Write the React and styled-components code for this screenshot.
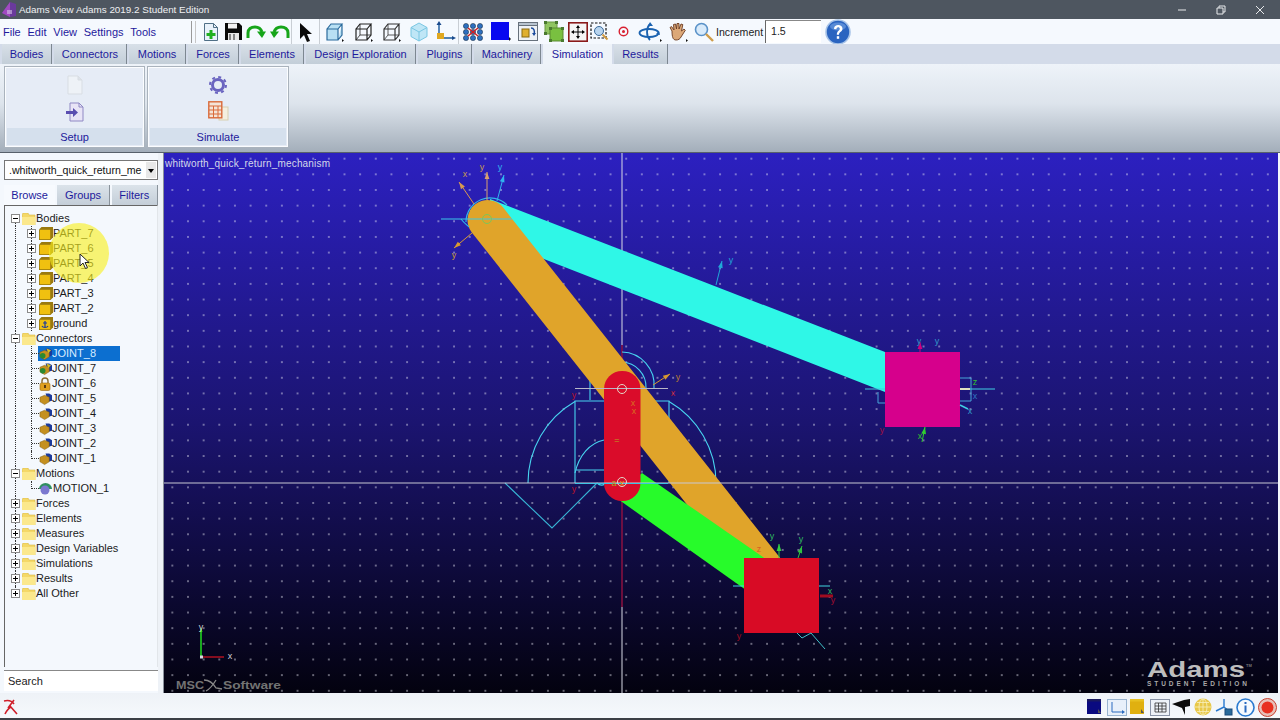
import React from 'react';
import styled, { createGlobalStyle } from 'styled-components';

const GlobalStyle = createGlobalStyle`
  html, body {
    margin: 0;
    padding: 0;
    overflow: hidden;
    background: #f3f7fc;
    font-family: "Liberation Sans", Arial, sans-serif;
  }
`;

const Window = styled.div`
  width: 1280px;
  height: 720px;
  display: flex;
  flex-direction: column;
  position: relative;
  overflow: hidden;
  font-size: 11px;
`;

const TitleBar = styled.div`
  height: 19px;
  flex: none;
  background: #4e5660;
  color: #eef0f2;
  display: flex;
  align-items: center;
  padding: 0 2px;
  gap: 3px;
`;

const TitleText = styled.span`
  flex: 1;
  font-size: 9.9px;
`;

const WindowButton = styled.div`
  width: 36px;
  height: 19px;
  display: flex;
  align-items: center;
  justify-content: center;
`;

const ToolRow = styled.div`
  height: 25px;
  flex: none;
  display: flex;
  align-items: center;
  background: #f5f9fe;
`;

const MenuBar = styled.div`
  width: 191px;
  display: flex;
  padding-left: 3px;
  box-sizing: border-box;
  gap: 6.8px;
`;

const MenuItem = styled.span`
  color: #1e1a9c;
  font-size: 11px;
`;

const Grip = styled.div`
  width: 3px;
  height: 22px;
  margin: 0 4px 0 0;
  border-left: 1px solid #9a9a9a;
  border-right: 1px solid #c6c6c6;
`;

const ToolSlot = styled.div`
  width: ${p => p.$w}px;
  height: 25px;
  flex: none;
  display: flex;
  align-items: center;
  justify-content: center;
  box-sizing: border-box;
  border-right: ${p => (p.$sep ? '1px solid #c9ced4' : 'none')};
`;

const IncrementLabel = styled.span`
  width: 49px;
  flex: none;
  color: #222;
  font-size: 10.6px;
`;

const IncrementInput = styled.div`
  width: 56px;
  height: 23px;
  flex: none;
  box-sizing: border-box;
  background: #fff;
  border-left: 1px solid #666;
  border-top: 1px solid #888;
  padding: 4px 0 0 5px;
  color: #222;
  font-size: 10.6px;
`;

const HelpSlot = styled.div`
  margin-left: 4px;
  display: flex;
`;

const TabRow = styled.div`
  height: 20px;
  flex: none;
  display: flex;
  background: #d3dbe9;
  padding-left: 2px;
  gap: 2px;
`;

const Tab = styled.div`
  width: ${p => p.$w}px;
  box-sizing: border-box;
  display: flex;
  align-items: center;
  justify-content: center;
  color: #1e1a9c;
  font-size: 11px;
  background: ${p => (p.$active ? '#eef3f9' : 'linear-gradient(#d8e0e8, #c3ced8)')};
  border-right: ${p => (p.$active ? 'none' : '1px solid #7d8791')};
`;

const Ribbon = styled.div`
  height: 89px;
  flex: none;
  box-sizing: border-box;
  display: flex;
  gap: 4px;
  padding: 3px 0 0 5px;
  background: linear-gradient(#eef3f9 0%, #dde4ec 45%, #a3aeba 100%);
  border-bottom: 1px solid #58616b;
`;

const RibbonPanel = styled.div`
  width: ${p => p.$w}px;
  height: 80px;
  box-sizing: border-box;
  display: flex;
  flex-direction: column;
  background: #e6ecf6;
  border: 1px solid #fbfdff;
  outline: 1px solid #aab3bd;
`;

const RibbonIcons = styled.div`
  flex: 1;
  display: flex;
  flex-direction: column;
  align-items: center;
  justify-content: center;
  gap: 7px;
`;

const RibbonLabel = styled.div`
  height: 17px;
  flex: none;
  margin: 0 1px 1px;
  background: #d5e0ed;
  color: #1e1a9c;
  font-size: 11px;
  display: flex;
  align-items: center;
  justify-content: center;
`;

const Main = styled.div`
  flex: 1;
  min-height: 0;
  display: flex;
`;

const Sidebar = styled.div`
  width: 158px;
  flex: none;
  box-sizing: border-box;
  display: flex;
  flex-direction: column;
  padding: 7px 0 2px 4px;
  background: #f4f8fd;
  position: relative;
`;

const Combo = styled.div`
  height: 20px;
  flex: none;
  box-sizing: border-box;
  display: flex;
  align-items: center;
  justify-content: space-between;
  background: #fff;
  border: 1px solid #777;
  padding: 0 1px 0 4px;
  color: #111;
  font-size: 10.6px;
`;

const ComboArrow = styled.div`
  width: 10px;
  height: 16px;
  background: #e8e8e8;
  display: flex;
  align-items: center;
  justify-content: center;
  &::after {
    content: '';
    border: 3.5px solid transparent;
    border-top: 4px solid #000;
    margin-top: 4px;
  }
`;

const SideTabs = styled.div`
  display: flex;
  height: 20px;
  flex: none;
  margin-top: 5px;
  gap: 2px;
`;

const SideTab = styled.div`
  width: ${p => p.$w}px;
  display: flex;
  align-items: center;
  justify-content: center;
  color: #1e1a9c;
  font-size: 11px;
  background: ${p => (p.$active ? '#f7fafe' : 'linear-gradient(#dbe3ea, #c4ced8)')};
  border-right: ${p => (p.$active ? 'none' : '1px solid #8a939c')};
`;

const TreePanel = styled.div`
  flex: 1;
  min-height: 0;
  margin-top: 0;
  padding-top: 5px;
  border-left: 1px solid #666;
  border-top: 1px solid #666;
  border-right: 1px solid #e2e6ea;
`;

const TreeRow = styled.div`
  height: 15px;
  display: flex;
  align-items: stretch;
  color: #1b1b1b;
  font-size: 11px;
  padding-left: 3px;
`;

const GuideCell = styled.div`
  width: ${p => p.$w || 16}px;
  flex: none;
  position: relative;
  &::before {
    content: '';
    position: absolute;
    left: 7px;
    top: ${p => (p.$first ? '7px' : '0')};
    bottom: ${p => (p.$last ? '7px' : '0')};
    border-left: 1px dotted #333;
    display: ${p => (p.$line ? 'block' : 'none')};
  }
  &::after {
    content: '';
    position: absolute;
    left: 8px;
    top: 7px;
    width: 7px;
    border-top: 1px dotted #333;
    display: ${p => (p.$elbow ? 'block' : 'none')};
  }
`;

const Expander = styled.div`
  position: absolute;
  left: 3px;
  top: 3px;
  width: 9px;
  height: 9px;
  box-sizing: border-box;
  border: 1px solid #8a8a8a;
  background: #fff;
  z-index: 1;
  &::before {
    content: '';
    position: absolute;
    left: 1px;
    right: 1px;
    top: 3px;
    border-top: 1px solid #000;
  }
  &::after {
    content: '';
    position: absolute;
    top: 1px;
    bottom: 1px;
    left: 3px;
    border-left: 1px solid #000;
    display: ${p => (p.$open ? 'none' : 'block')};
  }
`;

const TreeIcon = styled.div`
  width: ${p => p.$w || 14}px;
  flex: none;
  display: flex;
  align-items: center;
`;

const FolderSlot = styled(TreeIcon)`
  margin-left: -2px;
`;

const TreeLabel = styled.span`
  line-height: 15px;
  white-space: nowrap;
`;

const SelectedRow = styled.div`
  width: 82px;
  display: flex;
  padding-left: 1px;
  box-sizing: border-box;
  background: #0c6fd0;
  color: #d8ecff;
  margin-left: -1px;
`;

const SearchBox = styled.div`
  height: 21px;
  flex: none;
  margin-top: 3px;
  box-sizing: border-box;
  background: #fff;
  border-top: 1px solid #888;
  padding: 4px 0 0 4px;
  color: #222;
  font-size: 11px;
`;

const Splitter = styled.div`
  width: 5px;
  flex: none;
  background: #eef2f7;
  border-right: 1px solid #8b929c;
`;

const Viewport = styled.div`
  flex: 1;
  min-width: 0;
  display: flex;
  background: #14106a;
  border-right: 2px solid #f3f7fc;
`;

const StatusBar = styled.div`
  height: 27px;
  flex: none;
  box-sizing: border-box;
  display: flex;
  align-items: center;
  padding: 3px 2px 0 3px;
  background: linear-gradient(#eef2f7, #f6f9fc);
  border-bottom: 2px solid #3c4046;
`;

const StatusSpacer = styled.div`
  flex: 1;
`;

const StatusSlot = styled.div`
  width: 21.5px;
  display: flex;
  align-items: center;
  justify-content: center;
`;

const Highlight = styled.div`
  position: absolute;
  left: 49px;
  top: 70px;
  width: 60px;
  height: 60px;
  border-radius: 50%;
  background: rgba(248, 240, 30, 0.62);
  pointer-events: none;
`;

const Pointer = styled.svg`
  position: absolute;
  left: 79px;
  top: 100px;
`;

/* ---- toolbar drawings ---- */

const NewIcon = () => (
  <svg width="16" height="20" viewBox="0 0 16 20">
    <path d="M1.5 1.5h9l4 4v13h-13z" fill="#e8f1fa" stroke="#4f6f86" />
    <path d="M10.5 1.5v4h4" fill="none" stroke="#4f6f86" />
    <path d="M6.5 8h3v3h3v3h-3v3h-3v-3h-3v-3h3z" fill="#20b020" />
  </svg>
);
const SaveIcon = () => (
  <svg width="19" height="19" viewBox="0 0 19 19">
    <path d="M1 1h14l3 3v14H1z" fill="#0a0a0a" />
    <path d="M4 1.5h9v5H4z" fill="#f3f3f3" />
    <path d="M4 11h11v7H4z" fill="#e8e8e8" />
    <path d="M6 12v6M10 12v6" stroke="#222" />
  </svg>
);
const TurnIcon = ({ flip }) => (
  <svg width="21" height="14" viewBox="0 0 21 14" style={flip ? { transform: 'scaleX(-1)' } : undefined}>
    <path d="M2 13V8c0-4 3-6 7-6s6 2 7 5" fill="none" stroke="#16a51a" strokeWidth="3" />
    <path d="M11 6.5h9L16 13z" fill="#16a51a" />
  </svg>
);
const ArrowIcon = () => (
  <svg width="14" height="20" viewBox="0 0 14 20">
    <path d="M1 1l12 11H8l3 7-3 1-3-7-4 4z" fill="#0a0a0a" />
  </svg>
);
const CubeFrame = ({ fill, stroke }) => (
  <svg width="20" height="20" viewBox="0 0 20 20">
    <path d="M2 7h11v11H2zM2 7l4-5h11l-4 5M13 18l4-5V2" fill={fill} stroke={stroke} strokeWidth="1.2" />
    <path d="M6 2v11h11M2 18l4-5" fill="none" stroke={stroke} strokeWidth={fill === 'none' ? 0.8 : 0} />
    <path d="M17 17l2 1.5-2 1.5z" fill="#111" />
  </svg>
);
const ShadedCube = () => (
  <svg width="18" height="20" viewBox="0 0 18 20">
    <path d="M9 1l8 4.5v9L9 19l-8-4.5v-9z" fill="#bfe6f6" stroke="#79c6e2" />
    <path d="M1 5.5L9 10l8-4.5M9 10v9" fill="none" stroke="#79c6e2" />
  </svg>
);
const AxesIcon = () => (
  <svg width="22" height="22" viewBox="0 0 22 22">
    <path d="M5 2v15h15" fill="none" stroke="#1a5a9c" strokeWidth="1.4" />
    <path d="M5 0l-2.5 4h5zM22 17l-4-2v4z" fill="#1a4a8c" />
    <rect x="3" y="12" width="7" height="6" fill="#e0a820" />
  </svg>
);
const NetworkIcon = () => (
  <svg width="20" height="20" viewBox="0 0 20 20">
    {[3, 10, 17].map(x => [4, 10, 16].map(y => (
      <circle key={`${x}-${y}`} cx={x} cy={y} r="2.6" fill="#2d6fc0" stroke="#123" strokeWidth=".5" />
    )))}
    <path d="M5 14l10-8M5 6l10 8" stroke="#d42020" strokeWidth="1.6" />
  </svg>
);
const BlueSquare = () => (
  <svg width="20" height="20" viewBox="0 0 20 20">
    <rect width="18" height="18" fill="#0808f0" />
    <path d="M18 15l2 2-2 2z" fill="#111" />
  </svg>
);
const LayerIcon = () => (
  <svg width="22" height="20" viewBox="0 0 22 20">
    <rect x=".5" y=".5" width="19" height="18" fill="#eef2f6" stroke="#67717c" />
    <rect x=".5" y=".5" width="19" height="3" fill="#b8c4d0" stroke="#67717c" />
    <rect x="4" y="7" width="7" height="8" fill="#e0b030" stroke="#8a6a10" />
    <path d="M13 6c3 0 4 3 3 6" fill="none" stroke="#1a4a9c" strokeWidth="1.4" />
    <path d="M14 11h4l-2 3z" fill="#1a4a9c" />
  </svg>
);
const GreenSelect = () => (
  <svg width="21" height="21" viewBox="0 0 21 21">
    <rect x="1" y="1" width="12" height="12" fill="#8fc460" stroke="#6a9a40" />
    <rect x="6" y="7" width="13" height="13" fill="#79c040" stroke="#5a8a30" />
    {[[0, 0], [11, 0], [0, 11], [5, 6], [17, 6], [5, 18], [17, 18]].map(([x, y]) => (
      <rect key={`${x}-${y}`} x={x} y={y} width="3" height="3" fill="#4a7a30" />
    ))}
  </svg>
);
const FitIcon = () => (
  <svg width="20" height="20" viewBox="0 0 20 20">
    <rect x=".8" y=".8" width="18.4" height="18.4" fill="#f5f5f5" stroke="#8a1a1a" strokeWidth="1.6" />
    <path d="M10 3l2 3H8zM10 17l-2-3h4zM3 10l3-2v4zM17 10l-3 2V8z" fill="#000" />
    <path d="M10 5v10M5 10h10" stroke="#000" />
  </svg>
);
const ZoomBox = () => (
  <svg width="20" height="20" viewBox="0 0 20 20">
    <rect x="1" y="1" width="15" height="15" fill="none" stroke="#111" strokeWidth="1.2" strokeDasharray="2.5 1.5" />
    <circle cx="9" cy="9" r="4.5" fill="#b8d4ee" stroke="#3a6a9a" />
    <path d="M12.5 12.5l5 5" stroke="#d09a40" strokeWidth="2" />
  </svg>
);
const TargetIcon = () => (
  <svg width="11" height="11" viewBox="0 0 11 11">
    <circle cx="5.5" cy="5.5" r="4.3" fill="none" stroke="#d82030" strokeWidth="1.4" />
    <circle cx="5.5" cy="5.5" r="1.5" fill="#d82030" />
  </svg>
);
const RotateIcon = () => (
  <svg width="24" height="20" viewBox="0 0 24 20">
    <ellipse cx="11" cy="11" rx="9.5" ry="4" fill="none" stroke="#1a62b0" strokeWidth="1.8" />
    <path d="M12 18C8 14 8 6 12 2" fill="none" stroke="#1a62b0" strokeWidth="1.8" />
    <path d="M12 0l3 4h-5zM21 9l1 4-4-1z" fill="#1a62b0" />
    <path d="M22 17l2 1.5-2 1.5z" fill="#111" />
  </svg>
);
const HandIcon = () => (
  <svg width="20" height="20" viewBox="0 0 20 20">
    <path d="M4 9L2 5.5 3.6 4.600 6 8 5.500 2.500 7.500 2 8.500 7 9 1.500h2L11 7l2-5 1.800.6L13.500 9l2.500-2 1.300 1.300L13 15c-1 2-2.500 3-5 3-3 0-4-3-4-9z" fill="#dca878" stroke="#6a3a20" strokeWidth=".9" />
    <path d="M18 17l2 1.500-2 1.500z" fill="#111" />
  </svg>
);
const LensIcon = () => (
  <svg width="20" height="20" viewBox="0 0 20 20">
    <circle cx="7.500" cy="7.500" r="6" fill="#d8eafa" stroke="#5a92c8" strokeWidth="1.6" />
    <path d="M12 12l7 7" stroke="#cf9c48" strokeWidth="2.400" />
  </svg>
);
const HelpIcon = () => (
  <svg width="26" height="26" viewBox="0 0 26 26">
    <circle cx="13" cy="13" r="12" fill="#2a64c0" stroke="#a8c4e8" strokeWidth="1.600" />
    <ellipse cx="13" cy="7.500" rx="8" ry="4" fill="#6c9be0" opacity=".7" />
    <path d="M9 10c0-3 2-4 4.200-4s4.300 1.200 4.300 3.800c0 3-3.500 3-3.500 6h-2.200c0-4 3-4 3-6 0-1-.7-1.600-1.700-1.600S11.500 9 11.400 10.300z" fill="#fff" />
    <rect x="11.800" y="17.200" width="2.400" height="2.600" fill="#fff" />
  </svg>
);
const WindowGlyph = ({ d }) => (
  <svg width="10" height="10" viewBox="0 0 10 10">
    <path d={d} fill="none" stroke="#e8eaec" strokeWidth="1" />
  </svg>
);
const AppLogo = () => (
  <svg width="14" height="15" viewBox="0 0 14 15">
    <path d="M8 0l6 2v12l-6 1-8-4z" fill="#6a3a9c" />
    <path d="M8 0v15L0 11z" fill="#a04ac0" />
    <path d="M5 8h5v4H5z" fill="#d4c0e8" opacity=".6" />
  </svg>
);

/* ---- ribbon drawings ---- */

const BlankDoc = () => (
  <svg width="16" height="20" viewBox="0 0 16 20">
    <path d="M1 1h10l4 4v14H1z" fill="#eef2f7" stroke="#d8dde3" />
    <path d="M11 1v4h4" fill="#dde2e8" stroke="#d8dde3" />
  </svg>
);
const ImportDoc = () => (
  <svg width="20" height="20" viewBox="0 0 20 20">
    <path d="M5 1h9l4 4v14H5z" fill="#e8e4f6" stroke="#8f88c4" />
    <path d="M14 1v4h4" fill="none" stroke="#8f88c4" />
    <path d="M1 9h7V6l5 4.500-5 4.500v-3H1z" fill="#5a4eb0" />
  </svg>
);
const GearIcon = () => (
  <svg width="18" height="18" viewBox="0 0 18 18">
    <circle cx="9" cy="9" r="5.500" fill="none" stroke="#6a64c0" strokeWidth="3" />
    <circle cx="9" cy="9" r="8" fill="none" stroke="#6a64c0" strokeWidth="2" strokeDasharray="3 3.280" />
  </svg>
);
const TableDoc = () => (
  <svg width="21" height="20" viewBox="0 0 21 20">
    <rect x="11" y="6" width="9" height="13" fill="#f4efe0" stroke="#d8cfb0" />
    <rect x=".8" y=".8" width="13" height="16" fill="#f4e4d8" stroke="#d96a3a" strokeWidth="1.400" />
    <path d="M1 5h13M1 9h13M1 13h13M5.500 5v12M10 5v12" stroke="#d96a3a" />
  </svg>
);

/* ---- tree drawings ---- */

const FolderIcon = () => (
  <svg width="14" height="12" viewBox="0 0 14 12">
    <path d="M0 2l1-2h5l1 2h6v10H0z" fill="#f4d868" stroke="#d8b848" strokeWidth=".6" />
    <path d="M0 4h13.500v8H0z" fill="#fbe88c" />
  </svg>
);
const PartIcon = ({ anchor }) => (
  <svg width="14" height="13" viewBox="0 0 14 13">
    <path d="M0 2.500L2.500 0H14v10.500L11.500 13H0z" fill="#9a7a10" />
    <rect x=".8" y="2.800" width="10.400" height="9.400" fill="#f0c010" />
    {anchor && <path d="M6 4v7M4 6h4M3 9c1 2 5 2 6 0" fill="none" stroke="#1a3aa0" strokeWidth="1.200" />}
  </svg>
);
const JointIcon = ({ green }) => (
  <svg width="14" height="14" viewBox="0 0 14 14">
    <path d="M7 1h4l3 2v6l-4 1z" fill="#1a3a9c" />
    <path d="M1 5l5-2 5 2v5l-5 3-5-3z" fill="#c49020" stroke="#7a5a10" strokeWidth=".5" />
    {green && <circle cx="4" cy="9" r="3" fill="#2a8a30" />}
    {green && <path d="M8 1l5 2-3 3z" fill="#d8c020" />}
  </svg>
);
const LockIcon = () => (
  <svg width="12" height="14" viewBox="0 0 12 14">
    <path d="M3 6V4a3 3 0 0 1 6 0v2" fill="none" stroke="#8a6a30" strokeWidth="1.400" />
    <rect x="1" y="6" width="10" height="7.500" rx="1.500" fill="#e0a020" stroke="#9a6a10" strokeWidth=".6" />
    <rect x="5" y="8" width="2" height="3" fill="#5a3a10" />
  </svg>
);
const MotionIcon = () => (
  <svg width="13" height="12" viewBox="0 0 13 12">
    <path d="M0 6a6.500 6 0 0 1 13 0z" fill="#2f8f60" />
    <circle cx="6" cy="7" r="4.500" fill="#7a78d0" />
  </svg>
);

/* ---- status bar drawings ---- */

const ScissorIcon = () => (
  <svg width="17" height="17" viewBox="0 0 17 17">
    <path d="M1 2c4-1 8 0 10 3M11 1L5 9M7 7l7 8M2 15c2-4 4-6 6-7" fill="none" stroke="#cf1f2a" strokeWidth="1.600" />
  </svg>
);
const SwatchIcon = ({ top, bottom }) => (
  <svg width="16" height="16" viewBox="0 0 16 16">
    <rect x="0" y="0" width="14" height="15" fill={bottom} />
    <rect x="0" y="0" width="14" height="2.500" fill={top} />
    <path d="M11 10l3 4h-3z" fill="#555" />
  </svg>
);
const AxisTile = () => (
  <svg width="20" height="17" viewBox="0 0 20 17">
    <rect x=".5" y=".5" width="19" height="16" fill="#e8f0fa" stroke="#9ab4d0" />
    <path d="M5 3v10h10" fill="none" stroke="#2a6ac0" />
    <path d="M15 11l3 2-3 2z" fill="#2a6ac0" />
  </svg>
);
const GridTile = () => (
  <svg width="20" height="17" viewBox="0 0 20 17">
    <rect x=".5" y=".5" width="19" height="16" fill="#eef2f8" stroke="#8a94a8" />
    <path d="M5 4h11v9H5zM5 7h11M5 10h11M8.500 4v9M12 4v9" fill="none" stroke="#333" strokeWidth=".8" />
  </svg>
);
const ShadowTile = () => (
  <svg width="18" height="16" viewBox="0 0 18 16">
    <path d="M0 5l12-4 6-1v7l-5 1v8l-3-7z" fill="#0c0c0c" />
  </svg>
);
const GlobeIcon = () => (
  <svg width="18" height="18" viewBox="0 0 18 18">
    <circle cx="9" cy="9" r="8.500" fill="#e8c848" />
    <path d="M9 1v16M1 9h16M3 4.500h12M3 13.500h12" stroke="#f8f0c0" strokeWidth=".8" />
    <ellipse cx="9" cy="9" rx="4" ry="8" fill="none" stroke="#f8f0c0" strokeWidth=".8" />
  </svg>
);
const NodesIcon = () => (
  <svg width="18" height="18" viewBox="0 0 18 18">
    <path d="M9 1v8M9 9L1 13M9 9l5 4" stroke="#2a7ad0" strokeWidth="1.400" fill="none" />
    <rect x="10" y="11" width="7" height="6" fill="#2a6a9a" stroke="#1a4a7a" />
  </svg>
);
const InfoIcon = () => (
  <svg width="19" height="19" viewBox="0 0 19 19">
    <circle cx="9.500" cy="9.500" r="8.500" fill="#f6fafe" stroke="#2a7ad0" strokeWidth="1.600" />
    <rect x="8.500" y="4" width="2" height="2" fill="#2a6ac0" />
    <rect x="8.500" y="7.500" width="2" height="7" fill="#2a6ac0" />
  </svg>
);
const StopIcon = () => (
  <svg width="19" height="19" viewBox="0 0 19 19">
    <circle cx="9.500" cy="9.500" r="9" fill="#e8c0b8" stroke="#c84030" />
    <circle cx="9.500" cy="9.500" r="6" fill="#e83020" />
  </svg>
);

/* ---- model view ---- */

const axisFont = { fontFamily: '"Liberation Sans", sans-serif', fontSize: 9 };

const Arrow = ({ x1, y1, x2, y2, color }) => {
  const a = Math.atan2(y2 - y1, x2 - x1);
  const head = 7;
  const bx = x2 - head * Math.cos(a);
  const by = y2 - head * Math.sin(a);
  const nx = 2.4 * Math.sin(a);
  const ny = 2.4 * Math.cos(a);
  return (
    <g>
      <line x1={x1} y1={y1} x2={x2} y2={y2} stroke={color} strokeWidth="1" />
      <path d={`M${x2} ${y2}L${bx + nx} ${by - ny}L${bx - nx} ${by + ny}z`} fill={color} />
    </g>
  );
};

const Mark = ({ x, y, color, children }) => (
  <text x={x} y={y} fill={color} style={axisFont} textAnchor="middle">{children}</text>
);

const ModelView = () => (
  <svg width="1114" height="540" viewBox="164 153 1114 540">
    <defs>
      <linearGradient id="sky" x1="0" y1="0" x2="0" y2="1">
        <stop offset="0" stopColor="#2c20c0" />
        <stop offset="0.5" stopColor="#1b1470" />
        <stop offset="1" stopColor="#03020f" />
      </linearGradient>
      <pattern id="dots" x="500" y="345.500" width="15.650" height="15.650" patternUnits="userSpaceOnUse">
        <circle cx="1" cy="1" r="0.800" fill="#e8e8f4" />
      </pattern>
    </defs>
    <rect x="164" y="153" width="1114" height="540" fill="url(#sky)" />
    <rect x="164" y="153" width="1114" height="540" fill="url(#dots)" />

    <text x="165" y="167" fill="#d4d8ea" fontFamily='"Liberation Sans", sans-serif' fontSize="10" textLength="165">whitworth_quick_return_mechanism</text>

    {/* working grid */}
    <line x1="622" y1="153" x2="622" y2="345" stroke="#d8dae6" />
    <line x1="622" y1="345" x2="622" y2="607" stroke="#8c1140" strokeWidth="1.500" />
    <line x1="622" y1="607" x2="622" y2="693" stroke="#d8dae6" />

    {/* cut-out guide geometry */}
    <g fill="none" stroke="#48d4f0" strokeWidth="1.100">
      <path d="M528 483A94 94 0 0 1 575 401.500M669 401.500A94 94 0 0 1 716 483" />
      <path d="M575 483V401H669V483" />
      <path d="M590 388V352H600M590 400V388M654 388A33 33 0 0 0 622 352M646 388A25 25 0 0 0 622 362M638 388A18 18 0 0 0 622 370" />
      <path d="M576 470H604M575 473C579 455 590 443 604 440" />
      <path d="M505 483L552 528L597 483" stroke="#38b4d4" />
      <path d="M597 483c3 3 5 3 8 1" />
    </g>

    {/* links */}
    <path d="M490 199L885 352V392L490 238z" fill="#2ff7e7" />
    <line x1="487.500" y1="220" x2="780" y2="590" stroke="#e0a42a" strokeWidth="40" strokeLinecap="round" />
    <path d="M642 473L770 562L760 600L615 497z" fill="#27fb2a" />
    <rect x="604" y="371" width="36.500" height="130" rx="18" fill="#da0c2a" />
    <rect x="885" y="352" width="75" height="75" fill="#d6008c" />
    <rect x="744" y="558" width="75" height="75" fill="#d80b25" />

    {/* crank marker */}
    <g fill="none" stroke="#2fb6e8" strokeWidth="1.200">
      <path d="M466 222A24 24 0 0 1 507 205" />
      <path d="M461 219c3 4 6 6 8 8" />
    </g>
    <line x1="441" y1="219" x2="512" y2="219" stroke="#3ac8e8" />
    <circle cx="487" cy="219" r="4.500" fill="none" stroke="#7ac85a" />
    <Arrow x1={487} y1={200} x2={487} y2={172} color="#d8a070" />
    <Arrow x1={474} y1={204} x2={459} y2={182} color="#d89a50" />
    <Arrow x1={472} y1={233} x2={454} y2={248} color="#d89a30" />
    <Arrow x1={497} y1={201} x2={504} y2={175} color="#30b4f0" />
    <Mark x={482} y={170} color="#c89a50">y</Mark>
    <Mark x={465} y={177} color="#c89a50">x</Mark>
    <Mark x={500} y={170} color="#30b4f0">y</Mark>
    <Mark x={454} y={258} color="#c89a30">y</Mark>

    {/* mid link marker */}
    <Arrow x1={716} y1={285} x2={722} y2={261} color="#20a8d8" />
    <Mark x={731} y={263} color="#20a8d8">y</Mark>

    {/* slot markers */}
    <line x1="575" y1="388.500" x2="668" y2="388.500" stroke="#b8b8c8" />
    <line x1="164" y1="483" x2="1278" y2="483" stroke="#c8c8d4" />
    <line x1="575" y1="483.500" x2="668" y2="483.500" stroke="#3fc4e4" />
    <circle cx="622" cy="389" r="4.500" fill="none" stroke="#e4d8c8" />
    <circle cx="622" cy="482" r="4.500" fill="none" stroke="#e4d8c8" />
    <Arrow x1={653} y1={385} x2={670} y2={374} color="#d89a30" />
    <Mark x={678} y={380} color="#b87a30">y</Mark>
    <Mark x={574} y={398} color="#b8142c">y</Mark>
    <Mark x={673} y={396} color="#b8142c">x</Mark>
    <Mark x={633} y={406} color="#d87020">x</Mark>
    <Mark x={634} y={414} color="#d87020">x</Mark>
    <Mark x={617} y={443} color="#b8a020">=</Mark>
    <Mark x={574} y={492} color="#b8142c">y</Mark>
    <Mark x={614} y={486} color="#b0a820">a</Mark>
    <Mark x={622} y={486} color="#e0a020">x</Mark>

    {/* slider marker */}
    <path d="M878 392V403H885M960 378H971V401H960" fill="none" stroke="#46a4d8" />
    <line x1="865" y1="389" x2="885" y2="389" stroke="#40c8e0" />
    <line x1="960" y1="389" x2="995" y2="389" stroke="#40d0e4" />
    <path d="M960 389h10" stroke="#e0e0c0" strokeWidth="2" />
    <path d="M960 405l8 4" stroke="#40d0e4" strokeWidth="1.500" />
    <Arrow x1={922} y1={442} x2={925} y2={427} color="#30d030" />
    <Arrow x1={920} y1={352} x2={920} y2={342} color="#d00080" />
    <Mark x={919} y={344} color="#3098c8">y</Mark>
    <Mark x={937} y={344} color="#3098c8">y</Mark>
    <Mark x={975} y={385} color="#30c030">z</Mark>
    <Mark x={975} y={399} color="#3078c0">x</Mark>
    <Mark x={970} y={414} color="#3098c8">x</Mark>
    <Mark x={920} y={439} color="#30c030">x</Mark>
    <Mark x={882} y={433} color="#a01040">y</Mark>

    {/* block marker */}
    <line x1="733" y1="586" x2="744" y2="586" stroke="#40d8e0" />
    <line x1="819" y1="586" x2="830" y2="586" stroke="#40d8e0" />
    <path d="M797 633L802 638L811 633L825 649" fill="none" stroke="#40c0c8" />
    <path d="M820 596h13" stroke="#a00c20" strokeWidth="3" />
    <Arrow x1={779} y1={558} x2={779} y2={544} color="#30d040" />
    <Arrow x1={798} y1={558} x2={802} y2={546} color="#30c040" />
    <Mark x={772} y={539} color="#30b860">y</Mark>
    <Mark x={801} y={542} color="#30b860">y</Mark>
    <Mark x={759} y={552} color="#d86020">z</Mark>
    <Mark x={830} y={594} color="#30b860">x</Mark>
    <Mark x={833} y={603} color="#a00c30">y</Mark>
    <Mark x={739} y={639} color="#a00c20">y</Mark>

    {/* global triad */}
    <line x1="201" y1="657" x2="201" y2="631" stroke="#20e020" strokeWidth="1.500" />
    <line x1="202" y1="657" x2="224" y2="657" stroke="#b01020" strokeWidth="1.500" />
    <path d="M201 627l-1.500 5h3z" fill="#20e020" />
    <rect x="200" y="655.500" width="3" height="3" fill="#d8d8e0" />
    <Mark x={201} y={630} color="#d0d0d8">y</Mark>
    <Mark x={230} y={659} color="#d0d0d8">x</Mark>

    {/* watermarks */}
    <g fontFamily='"Liberation Sans", sans-serif' fontWeight="700" fill="#737373">
      <text x="176" y="689" fontSize="10" textLength="28" lengthAdjust="spacingAndGlyphs">MSC</text>
      <text x="223" y="689" fontSize="10" textLength="58" lengthAdjust="spacingAndGlyphs">Software</text>
    </g>
    <path d="M204 680c6 0 9 3 12 8l6 1M206 691c4-2 7-6 10-11" fill="none" stroke="#888" strokeWidth="1.300" />
    <g fontFamily='"Liberation Sans", sans-serif' fontWeight="700" fill="#bdbdbd">
      <text x="1147" y="677" fontSize="22" textLength="98" lengthAdjust="spacingAndGlyphs">Adams</text>
      <text x="1147" y="686" fontSize="6.500" textLength="100" fill="#a8a8a8">STUDENT EDITION</text>
      <text x="1246" y="667" fontSize="4" fill="#777">TM</text>
    </g>
  </svg>
);

const tools = [
  { w: 22, icon: <NewIcon /> },
  { w: 23, icon: <SaveIcon /> },
  { w: 23, icon: <TurnIcon /> },
  { w: 24, icon: <TurnIcon flip />, sep: true },
  { w: 28, icon: <ArrowIcon />, sep: true },
  { w: 30, icon: <CubeFrame fill="#b8e0f4" stroke="#2a6a9c" /> },
  { w: 28, icon: <CubeFrame fill="none" stroke="#222" /> },
  { w: 28, icon: <CubeFrame fill="none" stroke="#333" /> },
  { w: 26, icon: <ShadedCube /> },
  { w: 27, icon: <AxesIcon />, sep: true },
  { w: 28, icon: <NetworkIcon /> },
  { w: 28, icon: <BlueSquare /> },
  { w: 27, icon: <LayerIcon /> },
  { w: 24, icon: <GreenSelect /> },
  { w: 23, icon: <FitIcon /> },
  { w: 22, icon: <ZoomBox /> },
  { w: 25, icon: <TargetIcon /> },
  { w: 28, icon: <RotateIcon /> },
  { w: 27, icon: <HandIcon /> },
  { w: 25, icon: <LensIcon /> },
];

const topTabs = [
  ['Bodies', 50], ['Connectors', 73], ['Motions', 57], ['Forces', 51], ['Elements', 63],
  ['Design Exploration', 110], ['Plugins', 54], ['Machinery', 67], ['Simulation', 69, true], ['Results', 54],
];

const parts = [['PART_7'], ['PART_6'], ['PART_5'], ['PART_4'], ['PART_3'], ['PART_2'], ['ground', true]];
const joints = [
  ['JOINT_7', <JointIcon green />], ['JOINT_6', <LockIcon />], ['JOINT_5', <JointIcon />], ['JOINT_4', <JointIcon />],
  ['JOINT_3', <JointIcon />], ['JOINT_2', <JointIcon />], ['JOINT_1', <JointIcon />],
];
const closedFolders = ['Forces', 'Elements', 'Measures', 'Design Variables', 'Simulations', 'Results', 'All Other'];

const FolderRow = ({ name, open, first, last }) => (
  <TreeRow>
    <GuideCell $line $first={first} $last={last}>
      <Expander $open={open} />
    </GuideCell>
    <FolderSlot><FolderIcon /></FolderSlot>
    <TreeLabel>{name}</TreeLabel>
  </TreeRow>
);

const LeafRow = ({ icon, name, expandable, last, selected, iconWidth = 14 }) => {
  const content = (
    <>
      <TreeIcon $w={iconWidth}>{icon}</TreeIcon>
      <TreeLabel>{name}</TreeLabel>
    </>
  );
  return (
    <TreeRow>
      <GuideCell $line />
      <GuideCell $w={15} $line $last={last} $elbow={!expandable}>
        {expandable && <Expander />}
      </GuideCell>
      {selected ? <SelectedRow>{content}</SelectedRow> : content}
    </TreeRow>
  );
};

const App = () => {
  return (
    <Window>
      <GlobalStyle />
      <TitleBar>
        <AppLogo />
        <TitleText>Adams View Adams 2019.2 Student Edition</TitleText>
        <WindowButton><WindowGlyph d="M1 5h8" /></WindowButton>
        <WindowButton><WindowGlyph d="M1 3h6v6H1zM3 3V1h6v6H7" /></WindowButton>
        <WindowButton><WindowGlyph d="M1 1l8 8M9 1L1 9" /></WindowButton>
      </TitleBar>

      <ToolRow>
        <MenuBar>
          {['File', 'Edit', 'View', 'Settings', 'Tools'].map(m => <MenuItem key={m}>{m}</MenuItem>)}
        </MenuBar>
        <Grip />
        {tools.map((t, i) => <ToolSlot key={i} $w={t.w} $sep={t.sep}>{t.icon}</ToolSlot>)}
        <IncrementLabel>Increment</IncrementLabel>
        <IncrementInput>1.5</IncrementInput>
        <HelpSlot><HelpIcon /></HelpSlot>
      </ToolRow>

      <TabRow>
        {topTabs.map(([name, w, active]) => <Tab key={name} $w={w} $active={active}>{name}</Tab>)}
      </TabRow>

      <Ribbon>
        <RibbonPanel $w={139}>
          <RibbonIcons><BlankDoc /><ImportDoc /></RibbonIcons>
          <RibbonLabel>Setup</RibbonLabel>
        </RibbonPanel>
        <RibbonPanel $w={140}>
          <RibbonIcons><GearIcon /><TableDoc /></RibbonIcons>
          <RibbonLabel>Simulate</RibbonLabel>
        </RibbonPanel>
      </Ribbon>

      <Main>
        <Sidebar>
          <Combo>.whitworth_quick_return_me<ComboArrow /></Combo>
          <SideTabs>
            <SideTab $w={52} $active>Browse</SideTab>
            <SideTab $w={52}>Groups</SideTab>
            <SideTab $w={46}>Filters</SideTab>
          </SideTabs>
          <TreePanel>
            <FolderRow name="Bodies" open first />
            {parts.map(([name, anchor]) => (
              <LeafRow key={name} name={name} expandable icon={<PartIcon anchor={anchor} />} />
            ))}
            <FolderRow name="Connectors" open />
            <LeafRow name="JOINT_8" selected iconWidth={13} icon={<JointIcon green />} />
            {joints.map(([name, icon], i) => (
              <LeafRow key={name} name={name} iconWidth={13} icon={icon} last={i === joints.length - 1} />
            ))}
            <FolderRow name="Motions" open />
            <LeafRow name="MOTION_1" last icon={<MotionIcon />} />
            {closedFolders.map((name, i) => (
              <FolderRow key={name} name={name} last={i === closedFolders.length - 1} />
            ))}
          </TreePanel>
          <SearchBox>Search</SearchBox>
          <Highlight />
          <Pointer width="12" height="17" viewBox="0 0 12 17">
            <path d="M1 1v12l3-3 2.500 5.500 2-1L6 9.500h4z" fill="#fff" stroke="#222" />
          </Pointer>
        </Sidebar>
        <Splitter />
        <Viewport><ModelView /></Viewport>
      </Main>

      <StatusBar>
        <ScissorIcon />
        <StatusSpacer />
        <StatusSlot><SwatchIcon top="#1a1a60" bottom="#0a0a80" /></StatusSlot>
        <StatusSlot><AxisTile /></StatusSlot>
        <StatusSlot><SwatchIcon top="#e8c020" bottom="#e0b010" /></StatusSlot>
        <StatusSlot><GridTile /></StatusSlot>
        <StatusSlot><ShadowTile /></StatusSlot>
        <StatusSlot><GlobeIcon /></StatusSlot>
        <StatusSlot><NodesIcon /></StatusSlot>
        <StatusSlot><InfoIcon /></StatusSlot>
        <StatusSlot><StopIcon /></StatusSlot>
      </StatusBar>
    </Window>
  );
};

export default App;
